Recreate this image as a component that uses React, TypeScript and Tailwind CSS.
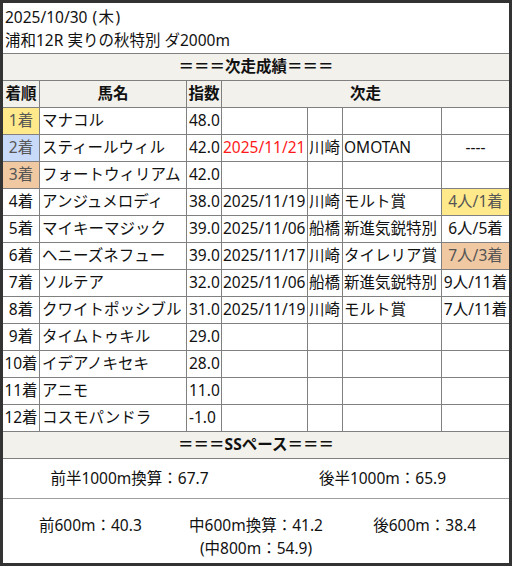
import React from "react";

type Row = {
  rank: string;
  name: string;
  score: string;
  date?: string;
  place?: string;
  race?: string;
  result?: string;
  rankBg?: string;
  resultBg?: string;
  dateRed?: boolean;
};

const rows: Row[] = [
  { rank: "1着", name: "マナコル", score: "48.0", rankBg: "bg-[#ffe98a] text-[#555]" },
  { rank: "2着", name: "スティールウィル", score: "42.0", date: "2025/11/21", place: "川崎", race: "OMOTAN", result: "----", rankBg: "bg-[#c9daf8] text-[#555]", dateRed: true },
  { rank: "3着", name: "フォートウィリアム", score: "42.0", rankBg: "bg-[#f0c9a2] text-[#555]" },
  { rank: "4着", name: "アンジュメロディ", score: "38.0", date: "2025/11/19", place: "川崎", race: "モルト賞", result: "4人/1着", resultBg: "bg-[#ffe98a] text-[#555]" },
  { rank: "5着", name: "マイキーマジック", score: "39.0", date: "2025/11/06", place: "船橋", race: "新進気鋭特別", result: "6人/5着" },
  { rank: "6着", name: "ヘニーズネフュー", score: "39.0", date: "2025/11/17", place: "川崎", race: "タイレリア賞", result: "7人/3着", resultBg: "bg-[#f0c9a2] text-[#555]" },
  { rank: "7着", name: "ソルテア", score: "32.0", date: "2025/11/06", place: "船橋", race: "新進気鋭特別", result: "9人/11着" },
  { rank: "8着", name: "クワイトポッシブル", score: "31.0", date: "2025/11/19", place: "川崎", race: "モルト賞", result: "7人/11着" },
  { rank: "9着", name: "タイムトゥキル", score: "29.0" },
  { rank: "10着", name: "イデアノキセキ", score: "28.0" },
  { rank: "11着", name: "アニモ", score: "11.0" },
  { rank: "12着", name: "コスモパンドラ", score: "-1.0" },
];

const cell = "h-[27px] border-t border-l border-[#808080] flex items-center whitespace-nowrap overflow-visible";

export default function App() {
  return (
    <div
      className="w-[512px] h-[566px] border-[3px] border-[#333] bg-white text-[15.5px] text-[#111] leading-none"
      style={{ fontFamily: '"Noto Sans", "Noto Sans CJK JP", sans-serif' }}
    >
      {/* title */}
      <div className="h-[50px] flex flex-col pt-[3px] pl-[2px]">
        <div className="h-[23px] flex items-center">
          2025/10/30<span className="ml-[5px] tracking-[1.5px]">(木)</span>
        </div>
        <div className="h-[23px] flex items-center">浦和12R 実りの秋特別 ダ2000m</div>
      </div>

      <div className="grid grid-cols-[36px_147px_35px_86px_35px_99px_68px]">
        <div className="col-span-7 h-[27px] border-t border-[#808080] bg-[#f2f1ec] flex items-center justify-center font-bold">
          ＝＝＝次走成績＝＝＝
        </div>

        {/* header */}
        <div className={`${cell} border-l-0 justify-center font-bold bg-[#f2f1ec]`}>着順</div>
        <div className={`${cell} justify-center font-bold bg-[#f2f1ec]`}>馬名</div>
        <div className={`${cell} justify-center font-bold bg-[#f2f1ec]`}>指数</div>
        <div className={`${cell} col-span-4 justify-center font-bold bg-[#f2f1ec]`}>次走</div>

        {rows.map((r) => (
          <React.Fragment key={r.rank}>
            <div className={`${cell} border-l-0 justify-center ${r.rankBg ?? ""}`}>{r.rank}</div>
            <div className={`${cell} px-[2px]`}>{r.name}</div>
            <div className={`${cell} px-[2px]`}>{r.score}</div>
            <div className={`${cell} px-[1px] ${r.dateRed ? "text-[#ff1a1a]" : ""}`}>{r.date}</div>
            <div className={`${cell} px-[1px]`}>{r.place}</div>
            <div className={`${cell} px-[1px]`}>{r.race}</div>
            <div className={`${cell} justify-center ${r.resultBg ?? ""}`}>{r.result}</div>
          </React.Fragment>
        ))}

        <div className="col-span-7 h-[27px] border-t border-[#808080] bg-[#f2f1ec] flex items-center justify-center font-bold">
          ＝＝＝SSペース＝＝＝
        </div>
      </div>

      {/* pace */}
      <div className="h-[40px] border-t border-[#808080] grid grid-cols-2 items-center">
        <div className="text-center">前半1000m換算：67.7</div>
        <div className="text-center">後半1000m：65.9</div>
      </div>
      <div className="border-t border-[#a0a0a0] pt-[18px]">
        <div className="grid grid-cols-3 items-center h-[18px]">
          <div className="text-center pl-[6px]">前600m：40.3</div>
          <div className="text-center">中600m換算：41.2</div>
          <div className="text-center">後600m：38.4</div>
        </div>
        <div className="text-center mt-[6px] h-[18px]">(中800m：54.9)</div>
      </div>
    </div>
  );
}
